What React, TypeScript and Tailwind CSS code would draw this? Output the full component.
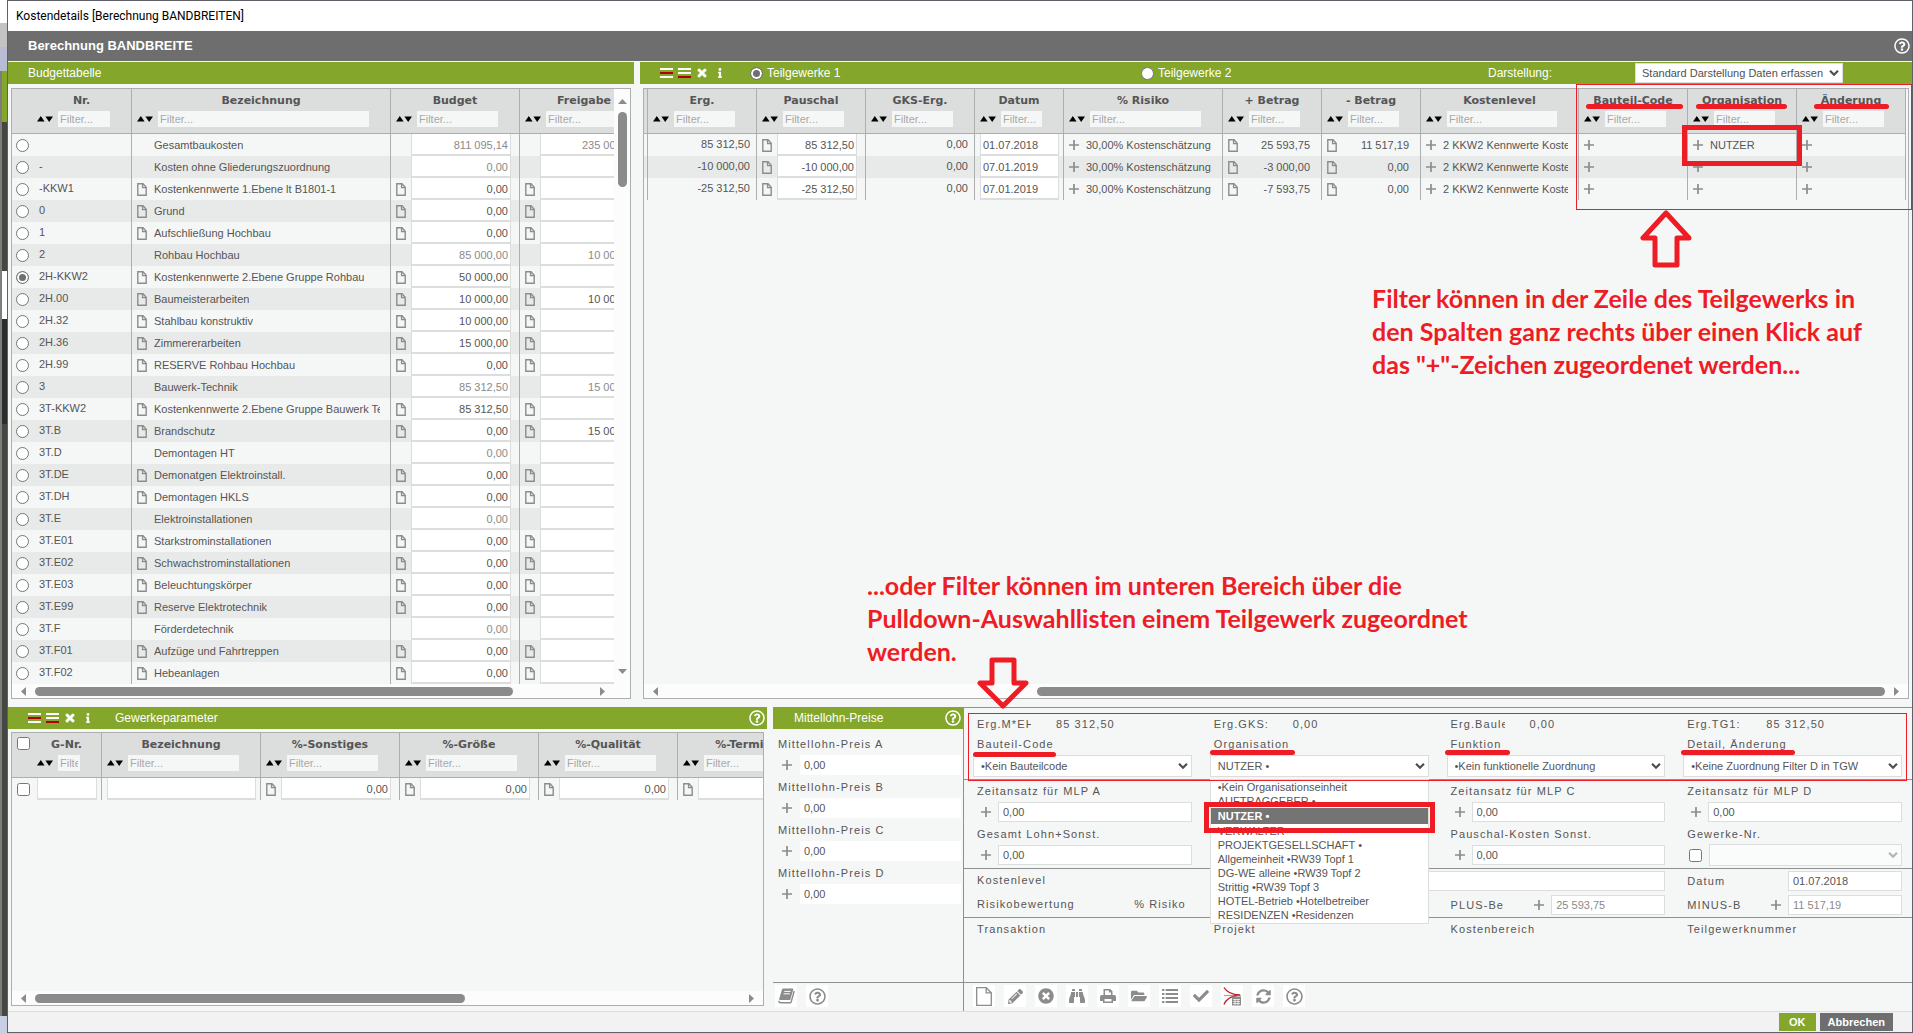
import { type ReactNode, useState } from "react";
import clsx from "clsx";
import {
  FaBinoculars,
  FaCheck,
  FaFolderOpen,
  FaInfo,
  FaPencilAlt,
  FaRegQuestionCircle,
  FaSyncAlt,
  FaTimes,
  FaTimesCircle,
} from "react-icons/fa";

interface BudgetRow {
  nr: string;
  name: string;
  budget: string;
  release?: string;
  group?: boolean;
}

const budgetRows: BudgetRow[] = [
  { nr: "", name: "Gesamtbaukosten", budget: "811 095,14", release: "235 000,00", group: true },
  { nr: "-", name: "Kosten ohne Gliederungszuordnung", budget: "0,00", group: true },
  { nr: "-KKW1", name: "Kostenkennwerte 1.Ebene lt B1801-1", budget: "0,00" },
  { nr: "0", name: "Grund", budget: "0,00" },
  { nr: "1", name: "Aufschließung Hochbau", budget: "0,00" },
  { nr: "2", name: "Rohbau Hochbau", budget: "85 000,00", release: "10 000,00", group: true },
  { nr: "2H-KKW2", name: "Kostenkennwerte 2.Ebene Gruppe Rohbau", budget: "50 000,00" },
  { nr: "2H.00", name: "Baumeisterarbeiten", budget: "10 000,00", release: "10 000,00" },
  { nr: "2H.32", name: "Stahlbau konstruktiv", budget: "10 000,00" },
  { nr: "2H.36", name: "Zimmererarbeiten", budget: "15 000,00" },
  { nr: "2H.99", name: "RESERVE Rohbau Hochbau", budget: "0,00" },
  { nr: "3", name: "Bauwerk-Technik", budget: "85 312,50", release: "15 000,00", group: true },
  { nr: "3T-KKW2", name: "Kostenkennwerte 2.Ebene Gruppe Bauwerk Technik", budget: "85 312,50" },
  { nr: "3T.B", name: "Brandschutz", budget: "0,00", release: "15 000,00" },
  { nr: "3T.D", name: "Demontagen HT", budget: "0,00", group: true },
  { nr: "3T.DE", name: "Demonatgen Elektroinstall.", budget: "0,00" },
  { nr: "3T.DH", name: "Demontagen HKLS", budget: "0,00" },
  { nr: "3T.E", name: "Elektroinstallationen", budget: "0,00", group: true },
  { nr: "3T.E01", name: "Starkstrominstallationen", budget: "0,00" },
  { nr: "3T.E02", name: "Schwachstrominstallationen", budget: "0,00" },
  { nr: "3T.E03", name: "Beleuchtungskörper", budget: "0,00" },
  { nr: "3T.E99", name: "Reserve Elektrotechnik", budget: "0,00" },
  { nr: "3T.F", name: "Förderdetechnik", budget: "0,00", group: true },
  { nr: "3T.F01", name: "Aufzüge und Fahrtreppen", budget: "0,00" },
  { nr: "3T.F02", name: "Hebeanlagen", budget: "0,00" },
];

const tradeRows = [
  { erg: "85 312,50", date: "01.07.2018", plus: "25 593,75", minus: "11 517,19", org: "NUTZER" },
  { erg: "-10 000,00", date: "07.01.2019", plus: "-3 000,00", minus: "0,00", org: "" },
  { erg: "-25 312,50", date: "07.01.2019", plus: "-7 593,75", minus: "0,00", org: "" },
];

const organisations = [
  "•Kein Organisationseinheit",
  "AUFTRAGGEBER •",
  "NUTZER •",
  "VERWALTER",
  "PROJEKTGESELLSCHAFT •",
  "Allgemeinheit •RW39 Topf 1",
  "DG-WE alleine •RW39 Topf 2",
  "Strittig •RW39 Topf 3",
  "HOTEL-Betrieb •Hotelbetreiber",
  "RESIDENZEN •Residenzen",
];

/* ---------- icons ---------- */

const DocIcon = () => (
  <svg width="10" height="13" viewBox="0 0 10 13" fill="none" stroke="#8c8c8c" strokeWidth="1.4" className="shrink-0">
    <path d="M.8 .8H6L9.2 4.2V12.2H.8Z" />
    <path d="M5.6 .8V4.6H9.2" />
  </svg>
);

const PlusIcon = () => (
  <svg width="10" height="10" viewBox="0 0 10 10" stroke="#8c8c8c" strokeWidth="1.7" className="shrink-0">
    <path d="M5 0V10M0 5H10" />
  </svg>
);

const SortIcon = () => (
  <svg width="16" height="6" viewBox="0 0 16 6" className="shrink-0">
    <path d="M0 5.5H7.6L3.8 0Z" />
    <path d="M8.4 .5H16L12.2 6Z" />
  </svg>
);

const Chevron = ({ color = "#4f4f4f" }: { color?: string }) => (
  <svg
    width="10"
    height="7"
    viewBox="0 0 10 7"
    fill="none"
    stroke={color}
    strokeWidth="2.2"
    className="pointer-events-none absolute top-1/2 right-1 -translate-y-1/2"
  >
    <path d="M1 1.2L5 5.2L9 1.2" />
  </svg>
);

const RowsIcon = ({ red }: { red: "middle" | "bottom" }) => (
  <svg width="13" height="10" viewBox="0 0 13 10">
    <rect width="13" height="2" fill="#fff" />
    <rect y="4" width="13" height="2" fill={red === "middle" ? "#b00000" : "#fff"} />
    <rect y="8" width="13" height="2" fill={red === "bottom" ? "#b00000" : "#fff"} />
  </svg>
);

const FileIcon = () => (
  <svg width="16" height="19" viewBox="0 0 16 19" fill="none" stroke="#8c8c8c" strokeWidth="1.3">
    <path d="M.7 .7H10.2L15.3 5.8V18.3H.7Z" />
    <path d="M10.2 .7V5.8H15.3" />
  </svg>
);

const PrintIcon = () => (
  <svg width="16" height="16" viewBox="0 0 16 16" fill="#8c8c8c">
    <path d="M3.5 7V1H10.2L12.5 3.3V7H11V4.6H9V2.5H5V7Z" />
    <path d="M2 7H14A2 2 0 0 1 16 9V13H13V15H3V13H0V9A2 2 0 0 1 2 7ZM4.5 11V13.6H11.5V11Z" fillRule="evenodd" />
  </svg>
);

const ListIcon = () => (
  <svg width="16" height="14" viewBox="0 0 16 14" fill="#8c8c8c">
    {[0, 4, 8, 12].map((y) => (
      <g key={y}>
        <rect y={y} width="2.4" height="2" />
        <rect x="3.6" y={y} width="12.4" height="2" />
      </g>
    ))}
  </svg>
);

const BookIcon = () => (
  <svg width="17" height="16" viewBox="0 0 17 16">
    <path d="M5 .5H14.5Q15.6 .6 15.2 1.8L12.2 12H2Q.9 12 1.2 10.8L4 1.4Q4.3 .5 5 .5Z" fill="#8c8c8c" />
    <path d="M6.3 3.4H12.6M5.6 5.8H11.9" stroke="#fff" strokeWidth="1" />
    <path d="M16.2 3L13.2 13.8Q13 14.8 12 14.8H2.4Q.9 14.8 .9 12.8" fill="none" stroke="#8c8c8c" strokeWidth="1.4" />
  </svg>
);

const PdfCalcIcon = () => (
  <svg width="19" height="19" viewBox="0 0 19 19" fill="none">
    <path d="M1 8.5H18" stroke="#a5a5a5" strokeWidth="1.2" />
    <path d="M1 .5Q5 7.5 17 8M1 17.5Q4 10 14 8.5" stroke="#c4232b" strokeWidth="1.4" />
    <rect x="9" y="9.5" width="9" height="9" fill="#8c8c8c" />
    <path d="M10 12.5H17M10 14.5H17M10 16.5H17M12 12V18M15 12V18" stroke="#fff" strokeWidth=".7" />
  </svg>
);

/* ---------- shared parts ---------- */

const HelpButton = ({ className }: { className?: string }) => (
  <button type="button" aria-label="Hilfe" className={clsx("text-white", className)}>
    <FaRegQuestionCircle size={16} />
  </button>
);

const BarTools = () => (
  <div className="flex items-center gap-[5px] text-white">
    <button type="button" aria-label="Zeile einfügen">
      <RowsIcon red="middle" />
    </button>
    <button type="button" aria-label="Zeile anhängen">
      <RowsIcon red="bottom" />
    </button>
    <button type="button" aria-label="Löschen">
      <FaTimes size={12} stroke="#fff" strokeWidth={40} />
    </button>
    <button type="button" aria-label="Info" className="ml-0.5">
      <FaInfo size={10} />
    </button>
  </div>
);

const Th = ({ label, className }: { label: string; className: string }) => (
  <th className={clsx("border-r border-b border-[#adafaf] p-0", className)}>
    <div className="flex h-[22px] items-center justify-center overflow-hidden pt-0.5 font-['DejaVu_Sans',sans-serif] text-[11px] font-bold whitespace-nowrap">
      {label}
    </div>
    <div className="flex items-center gap-[5px] pr-[21px] pb-1.5 pl-[5px]">
      <button type="button" aria-label={`${label} sortieren`}>
        <SortIcon />
      </button>
      <input
        aria-label={`${label} Filter`}
        placeholder="Filter..."
        className="h-4 w-0 flex-1 bg-[#f5f7f7] px-0.5 text-[11px] font-normal placeholder:text-[#a9a9a9]"
      />
    </div>
  </th>
);

const Td = ({ children, className }: { children?: ReactNode; className?: string }) => (
  <td className={clsx("h-[22px] border-r border-[#adafaf] p-0", className)}>
    <div className="flex h-[22px] items-center overflow-hidden pl-[5px] whitespace-nowrap">{children}</div>
  </td>
);

interface CellInputProps {
  label: string;
  value?: string;
  muted?: boolean;
  left?: boolean;
}

const CellInput = ({ label, value = "", muted, left }: CellInputProps) => (
  <input
    aria-label={label}
    defaultValue={value}
    className={clsx(
      "h-[22px] w-0 flex-1 border-r border-b-2 border-l border-[#dcdddd] bg-white px-0.5 pt-0.5",
      muted && "text-[#8a8a8a]",
      !left && "text-right",
    )}
  />
);

interface HScrollProps {
  start: number;
  size: number;
}

const HScroll = ({ start, size }: HScrollProps) => (
  <div className="flex h-3.5 items-center gap-[9px] bg-[#fcfcfc] px-[9px]">
    <svg width="5" height="9" viewBox="0 0 5 9" fill="#8b8b8b">
      <path d="M5 0V9L0 4.5Z" />
    </svg>
    <div className="flex-1">
      <div className="h-[9px] rounded-full bg-[#8b8b8b]" style={{ marginLeft: `${start}%`, width: `${size}%` }} />
    </div>
    <svg width="5" height="9" viewBox="0 0 5 9" fill="#8b8b8b">
      <path d="M0 0V9L5 4.5Z" />
    </svg>
  </div>
);

const Select = ({ label, value, disabled }: { label: string; value: string; disabled?: boolean }) => (
  <div className="relative min-w-0 flex-1">
    <select
      aria-label={label}
      disabled={disabled}
      className={clsx(
        "block h-[22px] w-full appearance-none border border-[#dcdddd] pr-5 pl-[7px]",
        disabled ? "bg-[#fafbfb]" : "bg-white",
      )}
    >
      <option>{value}</option>
    </select>
    <Chevron color={disabled ? "#b5b5b5" : undefined} />
  </div>
);

const radioClass =
  "size-[13px] shrink-0 appearance-none rounded-full border border-[#767676] bg-white checked:bg-[#6e6e6e] checked:shadow-[inset_0_0_0_2px_#fff]";

/* ---------- panels ---------- */

const BudgetPanel = () => {
  const [selected, setSelected] = useState("2H-KKW2");

  return (
    <section className="flex min-w-0 flex-col">
      <h2 className="flex h-[22px] items-center bg-[#83a62b] pl-5 text-xs text-white">Budgettabelle</h2>
      <div className="mt-1 mr-[3px] ml-[3px] border border-[#adafaf]">
        <div className="flex">
          <div className="min-w-0 flex-1 overflow-hidden">
            <table className="w-px table-fixed border-separate border-spacing-0">
              <thead>
                <tr className="bg-[#dcdddd]">
                  <th className="w-5 border-b border-[#adafaf]" />
                  <Th label="Nr." className="w-[100px]" />
                  <Th label="Bezeichnung" className="w-[259px]" />
                  <Th label="Budget" className="w-[129px]" />
                  <Th label="Freigabe" className="w-[129px]" />
                </tr>
              </thead>
              <tbody>
                {budgetRows.map((row) => (
                  <tr key={row.nr} className="even:bg-[#e8eaea]">
                    <td className="p-0">
                      <input
                        type="radio"
                        name="budget"
                        aria-label={row.name}
                        checked={selected === row.nr}
                        onChange={() => setSelected(row.nr)}
                        className={clsx("ml-1 block", radioClass)}
                      />
                    </td>
                    <Td>
                      <span className="pb-0.5 pl-0.5">{row.nr}</span>
                    </Td>
                    <Td>
                      <span className="flex w-[17px] shrink-0">{!row.group && <DocIcon />}</span>
                      <span className="mr-2.5 overflow-hidden">{row.name}</span>
                    </Td>
                    <Td>
                      <span className="flex w-[15px] shrink-0">{!row.group && <DocIcon />}</span>
                      <CellInput label="Budget" value={row.budget} muted={row.group} />
                      <span className="w-2" />
                    </Td>
                    <Td>
                      <span className="flex w-[15px] shrink-0">{!row.group && <DocIcon />}</span>
                      <CellInput label="Freigabe" value={row.release} muted={row.group} />
                      <span className="w-2" />
                    </Td>
                  </tr>
                ))}
              </tbody>
            </table>
          </div>
          {/* vertical scrollbar */}
          <div className="flex w-4 flex-col items-center bg-[#fcfcfc] pt-2.5 pb-2.5">
            <svg width="9" height="5" viewBox="0 0 9 5" fill="#8b8b8b">
              <path d="M0 5H9L4.5 0Z" />
            </svg>
            <div className="mt-2 flex-1">
              <div className="h-[75px] w-[9px] rounded-full bg-[#8b8b8b]" />
            </div>
            <svg width="9" height="5" viewBox="0 0 9 5" fill="#8b8b8b">
              <path d="M0 0H9L4.5 5Z" />
            </svg>
          </div>
        </div>
        <div className="bg-[#fcfcfc] pr-4">
          <HScroll start={0} size={86} />
        </div>
      </div>
    </section>
  );
};

const TradesPanel = () => {
  const [view, setView] = useState(1);

  return (
    <section className="flex min-w-0 flex-col">
      <div className="grid h-[22px] grid-cols-[501fr_347fr_147fr_277fr] items-center bg-[#83a62b] text-xs text-white">
        <div className="flex items-center pl-5">
          <BarTools />
          <label className="ml-[25px] flex items-center gap-1">
            <input type="radio" name="view" checked={view === 1} onChange={() => setView(1)} className={radioClass} />
            Teilgewerke 1
          </label>
        </div>
        <label className="flex items-center gap-1">
          <input type="radio" name="view" checked={view === 2} onChange={() => setView(2)} className={radioClass} />
          Teilgewerke 2
        </label>
        <label htmlFor="darstellung">Darstellung:</label>
        <div className="relative w-[208px] text-[11px] text-[#4f4f4f]">
          <select
            id="darstellung"
            className="block h-5 w-full appearance-none border border-[#dcdddd] bg-white pl-1.5"
          >
            <option>Standard Darstellung Daten erfassen</option>
          </select>
          <Chevron />
        </div>
      </div>
      <div className="mt-1 mr-[3px] ml-[3px] flex flex-1 flex-col border border-[#adafaf]">
        <div className="overflow-hidden">
          <table className="w-px table-fixed border-separate border-spacing-0">
            <thead>
              <tr className="bg-[#dcdddd]">
                <th className="w-1 border-r border-b border-[#adafaf]" />
                <Th label="Erg." className="w-[109px]" />
                <Th label="Pauschal" className="w-[109px]" />
                <Th label="GKS-Erg." className="w-[109px]" />
                <Th label="Datum" className="w-[89px]" />
                <Th label="% Risiko" className="w-[159px]" />
                <Th label="+ Betrag" className="w-[99px]" />
                <Th label="- Betrag" className="w-[99px]" />
                <Th label="Kostenlevel" className="w-[158px]" />
                <Th label="Bauteil-Code" className="w-[109px]" />
                <Th label="Organisation" className="w-[109px]" />
                <Th label="Änderung" className="w-[109px]" />
              </tr>
            </thead>
            <tbody>
              {tradeRows.map((row) => (
                <tr key={row.erg} className="even:bg-[#e8eaea]">
                  <td className="border-r border-[#adafaf] p-0" />
                  <Td>
                    <span className="flex-1 pr-1.5 pb-0.5 text-right">{row.erg}</span>
                  </Td>
                  <Td>
                    <span className="w-[15px] shrink-0">
                      <DocIcon />
                    </span>
                    <CellInput label="Pauschal" value={row.erg} />
                    <span className="w-2" />
                  </Td>
                  <Td>
                    <span className="flex-1 pr-1.5 pb-0.5 text-right">0,00</span>
                  </Td>
                  <Td>
                    <CellInput label="Datum" value={row.date} left />
                    <span className="w-1" />
                  </Td>
                  <Td>
                    <PlusIcon />
                    <span className="pl-[7px]">30,00% Kostenschätzung</span>
                  </Td>
                  <Td>
                    <DocIcon />
                    <span className="flex-1 pr-[11px] text-right">{row.plus}</span>
                  </Td>
                  <Td>
                    <DocIcon />
                    <span className="flex-1 pr-[11px] text-right">{row.minus}</span>
                  </Td>
                  <Td>
                    <PlusIcon />
                    <span className="mr-2.5 ml-[7px] overflow-hidden">2 KKW2 Kennwerte Kostenlevel</span>
                  </Td>
                  <Td>
                    <PlusIcon />
                  </Td>
                  <Td>
                    <PlusIcon />
                    <span className="pl-[7px]">{row.org}</span>
                  </Td>
                  <Td>
                    <PlusIcon />
                  </Td>
                </tr>
              ))}
            </tbody>
          </table>
        </div>
        <div className="mt-auto">
          <HScroll start={30.4} size={69.6} />
        </div>
      </div>
    </section>
  );
};

const ParameterPanel = () => (
  <section className="flex min-w-0 flex-col pr-1.5 pb-[5px]">
    <div className="flex h-[22px] items-center bg-[#83a62b] pr-0.5 pl-5 text-xs text-white">
      <BarTools />
      <h2 className="ml-[22px]">Gewerkeparameter</h2>
      <HelpButton className="ml-auto" />
    </div>
    <div className="mt-[3px] mr-[3px] ml-[3px] flex flex-1 flex-col border border-[#adafaf]">
      <div className="overflow-hidden">
        <table className="w-px table-fixed border-separate border-spacing-0">
          <thead>
            <tr className="bg-[#dcdddd]">
              <th className="w-5 border-b border-[#adafaf] p-0 align-top">
                <input type="checkbox" aria-label="Alle auswählen" className="mt-1 ml-[5px] block size-[13px]" />
              </th>
              <Th label="G-Nr." className="w-[70px]" />
              <Th label="Bezeichnung" className="w-[159px]" />
              <Th label="%-Sonstiges" className="w-[139px]" />
              <Th label="%-Größe" className="w-[139px]" />
              <Th label="%-Qualität" className="w-[139px]" />
              <Th label="%-Termine" className="w-[139px]" />
            </tr>
          </thead>
          <tbody>
            <tr>
              <td className="p-0">
                <input type="checkbox" aria-label="Zeile auswählen" className="ml-[5px] block size-[13px]" />
              </td>
              <Td>
                <CellInput label="G-Nr." left />
                <span className="w-1" />
              </Td>
              <Td>
                <CellInput label="Bezeichnung" left />
                <span className="w-1" />
              </Td>
              {["%-Sonstiges", "%-Größe", "%-Qualität", "%-Termine"].map((label) => (
                <Td key={label}>
                  <span className="w-[15px] shrink-0">
                    <DocIcon />
                  </span>
                  <CellInput label={label} value="0,00" />
                  <span className="w-2" />
                </Td>
              ))}
            </tr>
          </tbody>
        </table>
      </div>
      <div className="mt-auto">
        <HScroll start={0} size={61} />
      </div>
    </div>
  </section>
);

const ToolButton = ({ label, children }: { label: string; children: ReactNode }) => (
  <button
    type="button"
    aria-label={label}
    className="flex size-[22px] items-center justify-center bg-white text-[#8c8c8c]"
  >
    {children}
  </button>
);

const RatesPanel = () => (
  <section className="flex min-w-0 flex-col">
    <div className="flex h-[22px] items-center bg-[#83a62b] pr-0.5 pl-[21px] text-xs text-white">
      <h2>Mittellohn-Preise</h2>
      <HelpButton className="ml-auto" />
    </div>
    <div className="flex flex-1 flex-col gap-px border-b border-[#8f9191] pt-1 pr-0.5 pl-[5px]">
      {["A", "B", "C", "D"].map((rate) => (
        <div key={rate}>
          <label htmlFor={`mlp-${rate}`} className="flex h-[22px] items-center tracking-widest">
            Mittellohn-Preis {rate}
          </label>
          <div className="flex items-center gap-2 pl-1">
            <PlusIcon />
            <input id={`mlp-${rate}`} defaultValue="0,00" className="h-5 w-0 flex-1 bg-white px-1" />
          </div>
        </div>
      ))}
    </div>
    <div className="flex h-7 gap-[9px] pt-0.5 pl-0.5">
      <ToolButton label="Handbuch">
        <BookIcon />
      </ToolButton>
      <ToolButton label="Hilfe">
        <FaRegQuestionCircle size={17} />
      </ToolButton>
    </div>
  </section>
);

const formGrid = "grid grid-cols-4 gap-x-[18px] border-b border-[#8f9191] pr-2.5 pl-[9px]";
const boxClass = "h-5 min-w-0 border border-[#dcdddd] bg-white pl-1";

const PlusField = ({ label }: { label: string }) => (
  <label className="flex flex-col">
    <span className="flex h-[22px] items-center pl-1 tracking-widest">{label}</span>
    <span className="flex items-center gap-[7px] pl-2">
      <PlusIcon />
      <input defaultValue="0,00" className={clsx("w-0 flex-1", boxClass)} />
    </span>
  </label>
);

const filterFields = [
  { erg: "Erg.M*EH:", sum: "85 312,50", label: "Bauteil-Code", value: "•Kein Bauteilcode" },
  { erg: "Erg.GKS:", sum: "0,00", label: "Organisation", value: "NUTZER •" },
  { erg: "Erg.Baulei", sum: "0,00", label: "Funktion", value: "•Kein funktionelle Zuordnung" },
  { erg: "Erg.TG1:", sum: "85 312,50", label: "Detail, Änderung", value: "•Keine Zuordnung Filter D in TGW" },
];

const DetailPanel = () => (
  <section className="flex min-w-0 flex-col border-t border-l border-[#8f9191]">
    <div className={clsx(formGrid, "pt-1.5 pb-0.5")}>
      {filterFields.map((field) => (
        <div key={field.label} className="relative flex min-w-0 flex-col">
          <div className="flex h-5 items-center pl-1 tracking-widest">
            <span className="w-[54px] overflow-hidden whitespace-nowrap">{field.erg}</span>
            <span className="pl-[25px]">{field.sum}</span>
          </div>
          <div className="mb-px flex h-5 items-center pl-1 tracking-widest">{field.label}</div>
          <Select label={field.label} value={field.value} />
          {field.label === "Organisation" && (
            <ul
              role="listbox"
              aria-label="Organisation"
              className="absolute top-full right-0 left-0 z-10 mt-0.5 border border-[#dcdddd] bg-white pb-px leading-[14px]"
            >
              {organisations.map((name) => (
                <li
                  key={name}
                  role="option"
                  aria-selected={name === "NUTZER •"}
                  className={clsx(
                    "pl-[7px] whitespace-nowrap",
                    name === "NUTZER •" && "bg-[#747474] py-px font-bold text-white",
                  )}
                >
                  {name}
                </li>
              ))}
            </ul>
          )}
        </div>
      ))}
    </div>

    <div className={clsx(formGrid, "gap-y-px pb-[3px]")}>
      <PlusField label="Zeitansatz für MLP A" />
      <PlusField label="Zeitansatz für MLP B" />
      <PlusField label="Zeitansatz für MLP C" />
      <PlusField label="Zeitansatz für MLP D" />
      <PlusField label="Gesamt Lohn+Sonst." />
      <PlusField label="Gesamt-Kosten" />
      <PlusField label="Pauschal-Kosten Sonst." />
      <div>
        <label htmlFor="gewerke" className="flex h-[22px] items-center pl-1 tracking-widest">
          Gewerke-Nr.
        </label>
        <div className="flex h-5 items-center gap-[7px] pl-1.5">
          <input id="gewerke" type="checkbox" className="size-[13px]" />
          <Select label="Gewerke-Nr." value="" disabled />
        </div>
      </div>
    </div>

    <div className={clsx(formGrid, "gap-y-1 py-0.5")}>
      <label htmlFor="kostenlevel" className="pl-1 leading-[18px] tracking-widest">
        Kostenlevel
      </label>
      <input id="kostenlevel" className={clsx("col-span-2", boxClass)} />
      <label className="flex items-center justify-between pl-1 tracking-widest">
        Datum
        <input defaultValue="01.07.2018" className={clsx("w-[114px] tracking-normal", boxClass)} />
      </label>
      <div className="flex justify-between pr-1.5 pl-1 leading-[18px] tracking-widest">
        <span>Risikobewertung</span>
        <span>% Risiko</span>
      </div>
      <span />
      {[
        { label: "PLUS-Be", value: "25 593,75" },
        { label: "MINUS-B", value: "11 517,19" },
      ].map((field) => (
        <label key={field.label} className="flex items-center gap-[7px] pl-1 tracking-widest">
          <span className="flex-1">{field.label}</span>
          <PlusIcon />
          <input
            defaultValue={field.value}
            className={clsx("w-[114px] tracking-normal text-[#8a8a8a]", boxClass)}
          />
        </label>
      ))}
    </div>

    <div className={clsx(formGrid, "flex-1 leading-[22px] tracking-widest")}>
      <span className="pl-1">Transaktion</span>
      <span className="pl-1">Projekt</span>
      <span className="pl-1">Kostenbereich</span>
      <span className="pl-1">Teilgewerknummer</span>
    </div>

    <div className="flex h-7 gap-[9px] pt-0.5 pl-[9px]">
      <ToolButton label="Neu">
        <FileIcon />
      </ToolButton>
      <ToolButton label="Bearbeiten">
        <FaPencilAlt size={15} />
      </ToolButton>
      <ToolButton label="Löschen">
        <FaTimesCircle size={16} />
      </ToolButton>
      <ToolButton label="Suchen">
        <FaBinoculars size={16} />
      </ToolButton>
      <ToolButton label="Drucken">
        <PrintIcon />
      </ToolButton>
      <ToolButton label="Öffnen">
        <FaFolderOpen size={16} />
      </ToolButton>
      <ToolButton label="Liste">
        <ListIcon />
      </ToolButton>
      <ToolButton label="Übernehmen">
        <FaCheck size={16} />
      </ToolButton>
      <ToolButton label="PDF Berechnung">
        <PdfCalcIcon />
      </ToolButton>
      <ToolButton label="Aktualisieren">
        <FaSyncAlt size={15} />
      </ToolButton>
      <ToolButton label="Hilfe">
        <FaRegQuestionCircle size={17} />
      </ToolButton>
    </div>
  </section>
);

/* ---------- red markers and notes lying over the window ---------- */

const noteClass = "absolute font-['Lato',sans-serif] text-[25px] leading-[33px] font-bold whitespace-nowrap text-[#ee1c24]";

const Annotations = () => (
  <div className="pointer-events-none absolute inset-0 z-20">
    <div className="absolute top-[84px] left-[1576px] h-[126px] w-[336px] border border-[#ee1c24]" />
    <div className="absolute top-[125px] left-[1682px] h-[41px] w-[120px] border-5 border-[#ee1c24]" />
    <div className="absolute top-[104px] left-[1586px] h-[5px] w-[97px] rounded-full bg-[#ee1c24]" />
    <div className="absolute top-[104px] left-[1696px] h-[5px] w-[91px] rounded-full bg-[#ee1c24]" />
    <div className="absolute top-[104px] left-[1814px] h-[5px] w-[75px] rounded-full bg-[#ee1c24]" />
    <svg
      width="52"
      height="58"
      viewBox="0 0 52 58"
      fill="none"
      stroke="#ee1c24"
      strokeWidth="5"
      strokeLinejoin="round"
      className="absolute top-[210px] left-[1640px]"
    >
      <path d="M26 3L3 28H15V55H37V28H49Z" />
    </svg>
    <p className={clsx(noteClass, "top-[282px] left-[1372px]")}>
      Filter können in der Zeile des Teilgewerks in
      <br />
      den Spalten ganz rechts über einen Klick auf
      <br />
      das "+"-Zeichen zugeordenet werden...
    </p>

    <p className={clsx(noteClass, "top-[569px] left-[867px]")}>
      ...oder Filter können im unteren Bereich über die
      <br />
      Pulldown-Auswahllisten einem Teilgewerk zugeordnet
      <br />
      werden.
    </p>
    <svg
      width="52"
      height="52"
      viewBox="0 0 52 52"
      fill="none"
      stroke="#ee1c24"
      strokeWidth="5"
      strokeLinejoin="round"
      className="absolute top-[657px] left-[977px]"
    >
      <path d="M15 3H37V26H49L26 49L3 26H15Z" />
    </svg>
    <div className="absolute top-[713px] left-[968px] h-[68px] w-[939px] border border-[#ee1c24]" />
    <div className="absolute top-[752px] left-[973px] h-[5px] w-[83px] rounded-full bg-[#ee1c24]" />
    <div className="absolute top-[750px] left-[1210px] h-[5px] w-[85px] rounded-full bg-[#ee1c24]" />
    <div className="absolute top-[750px] left-[1445px] h-[5px] w-[65px] rounded-full bg-[#ee1c24]" />
    <div className="absolute top-[750px] left-[1681px] h-[5px] w-[114px] rounded-full bg-[#ee1c24]" />
    <div className="absolute top-[802px] left-[1204px] h-[31px] w-[231px] border-5 border-[#ee1c24]" />
  </div>
);

export default function App() {
  return (
    <div className="relative flex min-h-screen overflow-hidden bg-[#c5cbd9] font-['Liberation_Sans',Arial,sans-serif] text-[11px] leading-4 text-[#555]">
      {/* slice of the application behind the dialog */}
      <div className="flex w-[7px] shrink-0 flex-col">
        <div className="h-[23px] bg-white" />
        <div className="h-6 bg-[#c3c3c3]" />
        <div className="h-6 bg-[#b9bbd3]" />
        <div className="h-[51px] border-l-2 border-[#7d7d7d] bg-[#83a62b]" />
        <div className="h-[149px] border-l-2 border-[#7d7d7d] bg-[#454842]" />
        <div className="h-12 border-l-2 border-[#7d7d7d] bg-white" />
        <div className="h-[105px] border-l-2 border-[#7d7d7d] bg-[#2b2f2b]" />
        <div className="flex-1 border-l-2 border-[#7d7d7d] bg-[#454842]" />
        <div className="h-[18px] bg-[#c9cfe2]" />
      </div>

      <main className="mb-px flex min-w-0 flex-1 flex-col border border-[#5f6068] bg-[#f5f7f7]">
        <header>
          <div className="flex h-[30px] items-center bg-white pl-2 font-['Roboto',sans-serif] text-xs text-black">
            Kostendetails [Berechnung BANDBREITEN]
          </div>
          <div className="flex h-[30px] items-center justify-between bg-[#6e6e6e] pr-0.5 pl-5 text-white">
            <h1 className="text-[13px] font-bold">Berechnung BANDBREITE</h1>
            <HelpButton />
          </div>
        </header>

        <div className="mt-px mb-2 grid grid-cols-[626fr_1272fr] gap-1.5">
          <BudgetPanel />
          <TradesPanel />
        </div>

        <div className="grid flex-1 grid-cols-[765fr_190fr_949fr]">
          <ParameterPanel />
          <RatesPanel />
          <DetailPanel />
        </div>

        <footer className="flex h-[21px] items-start justify-end gap-1 border-t border-[#dcdddd] bg-[#f2f2f2] pt-px pr-[19px] text-[11px] font-bold text-white">
          <button type="button" className="h-[18px] bg-[#83a62b] px-2.5">
            OK
          </button>
          <button type="button" className="h-[18px] bg-[#6e6e6e] px-2">
            Abbrechen
          </button>
        </footer>
      </main>

      <Annotations />
    </div>
  );
}
